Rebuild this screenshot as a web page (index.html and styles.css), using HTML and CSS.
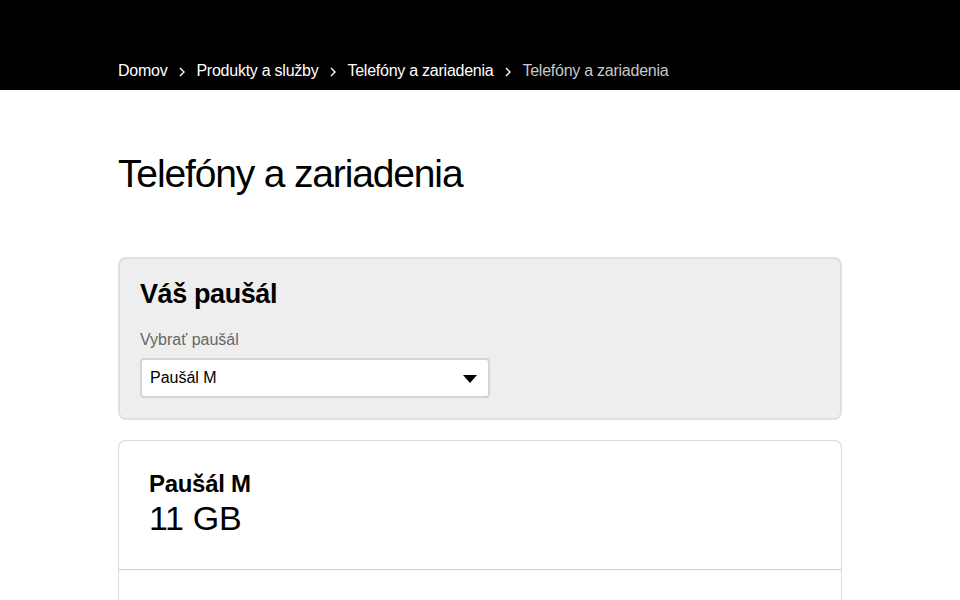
FILE: index.html
```html
<!DOCTYPE html>
<html lang="sk">
<head>
<meta charset="utf-8">
<link rel="stylesheet" href="styles.css">
</head>
<body>
<header class="top">
  <nav class="crumbs">
    <a class="crumb">Domov</a>
    <svg class="chev" viewBox="0 0 8 12" width="8" height="12"><path d="M2 2l4 4-4 4" fill="none" stroke="#fff" stroke-width="1.4"/></svg>
    <a class="crumb">Produkty a služby</a>
    <svg class="chev" viewBox="0 0 8 12" width="8" height="12"><path d="M2 2l4 4-4 4" fill="none" stroke="#fff" stroke-width="1.4"/></svg>
    <a class="crumb">Telefóny a zariadenia</a>
    <svg class="chev" viewBox="0 0 8 12" width="8" height="12"><path d="M2 2l4 4-4 4" fill="none" stroke="#fff" stroke-width="1.4"/></svg>
    <span class="crumb current">Telefóny a zariadenia</span>
  </nav>
</header>
<main class="main">
  <h1 class="title">Telefóny a zariadenia</h1>
  <section class="plan-box">
    <h2 class="plan-heading">Váš paušál</h2>
    <label class="plan-label">Vybrať paušál</label>
    <div class="select">
      <span>Paušál M</span>
      <svg class="caret" viewBox="0 0 14 8" width="14" height="8"><path d="M0 0h14L7 8z" fill="#000"/></svg>
    </div>
  </section>
  <section class="card">
    <div class="card-head">
      <div class="card-name">Paušál M</div>
      <div class="card-data">11 GB</div>
    </div>
    <div class="card-body"></div>
  </section>
</main>
</body>
</html>
```
FILE: styles.css
```css
* { box-sizing: border-box; }
html, body { margin: 0; padding: 0; }
body {
  font-family: "Liberation Sans", Arial, sans-serif;
  color: #000;
  background: #fff;
  width: 960px;
  height: 600px;
  overflow: hidden;
}
.top {
  background: #000;
  height: 90px;
  padding: 0 118px;
  display: flex;
  align-items: flex-end;
}
.crumbs {
  display: flex;
  align-items: center;
  height: 38px;
  font-size: 16px;
  color: #fff;
  letter-spacing: -0.25px;
}
.crumb { color: #fff; text-decoration: none; }
.crumb.current { color: #c8c8c8; }
.chev { margin: 1px 10px 0 11px; }
.main {
  padding: 0 118px;
}
.title {
  margin: 0;
  padding-top: 61px;
  height: 167px;
  font-weight: normal;
  font-size: 39px;
  letter-spacing: -1.15px;
  line-height: 46px;
}
.plan-box {
  background: #eeeeee;
  border: 2px solid #e0e0e0;
  border-radius: 8px;
  padding: 20px;
  height: 163px;
}
.plan-heading {
  margin: 0;
  font-size: 27px;
  font-weight: bold;
  line-height: 31px;
  letter-spacing: -0.4px;
}
.plan-label {
  display: block;
  margin-top: 20px;
  font-size: 16px;
  color: #666;
  line-height: 20px;
}
.select {
  margin-top: 8px;
  width: 350px;
  height: 40px;
  background: #fff;
  border: 2px solid #d4d4d4;
  border-radius: 4px;
  display: flex;
  align-items: center;
  justify-content: space-between;
  padding: 0 11px 0 8px;
  font-size: 16px;
}
.caret { margin-top: 1px; }
.card {
  margin-top: 20px;
  border: 1px solid #dadada;
  border-bottom: none;
  border-radius: 8px 8px 0 0;
  height: 200px;
}
.card-head {
  padding: 29px 30px 0 30px;
  height: 129px;
  border-bottom: 1px solid #cfcfcf;
}
.card-name {
  font-size: 24px;
  font-weight: bold;
  line-height: 28px;
  letter-spacing: -0.3px;
}
.card-data {
  font-size: 34px;
  line-height: 40px;
  letter-spacing: -0.3px;
}
```
